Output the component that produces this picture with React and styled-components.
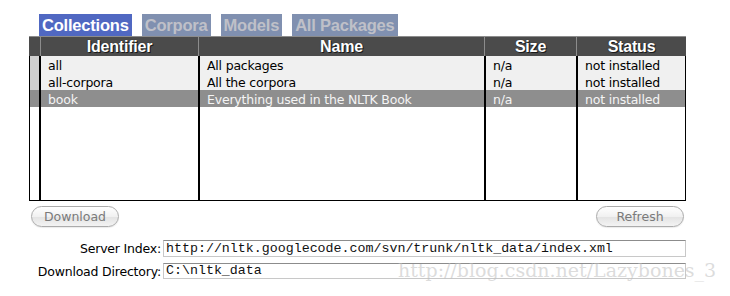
import React from "react";
import styled, { createGlobalStyle } from "styled-components";

const GlobalStyle = createGlobalStyle`
  html, body {
    margin: 0;
    padding: 0;
    background: #ffffff;
  }
  body {
    font-family: "DejaVu Sans", "Liberation Sans", sans-serif;
  }
`;

const packages = [
  { id: "all", name: "All packages", size: "n/a", status: "not installed" },
  { id: "all-corpora", name: "All the corpora", size: "n/a", status: "not installed" },
  { id: "book", name: "Everything used in the NLTK Book", size: "n/a", status: "not installed", selected: true },
];

const tabs = ["Collections", "Corpora", "Models", "All Packages"];

export default function App() {
  return (
    <Page>
      <GlobalStyle />
      <TabBar>
        {tabs.map((t, i) => (
          <Tab key={t} $active={i === 0}>{t}</Tab>
        ))}
      </TabBar>
      <Table>
        <HeaderRow>
          <HeadCell />
          <HeadCell>Identifier</HeadCell>
          <HeadCell>Name</HeadCell>
          <HeadCell>Size</HeadCell>
          <HeadCell>Status</HeadCell>
        </HeaderRow>
        <Body>
          {packages.map((p) => (
            <Row key={p.id} $selected={p.selected}>
              <Marker />
              <Cell>{p.id}</Cell>
              <Cell>{p.name}</Cell>
              <Cell>{p.size}</Cell>
              <Cell>{p.status}</Cell>
            </Row>
          ))}
          <Filler>
            <Marker />
            <Cell />
            <Cell />
            <Cell />
            <Cell />
          </Filler>
        </Body>
      </Table>
      <ButtonRow>
        <PillButton>Download</PillButton>
        <PillButton>Refresh</PillButton>
      </ButtonRow>
      <Form>
        <Label>Server Index:</Label>
        <Field>http://nltk.googlecode.com/svn/trunk/nltk_data/index.xml</Field>
        <Label>Download Directory:</Label>
        <Field $short>C:\nltk_data</Field>
      </Form>
      <Watermark>http://blog.csdn.net/Lazybones_3</Watermark>
    </Page>
  );
}

const Page = styled.div`
  position: relative;
  width: 730px;
  height: 296px;
  padding: 14px 0 0 29px;
  box-sizing: border-box;
  overflow: hidden;
`;

const TabBar = styled.div`
  display: flex;
  gap: 10px;
  margin-left: 10px;
  height: 22px;
`;

const Tab = styled.div`
  display: flex;
  align-items: center;
  padding: 1px 3px 0;
  font-family: "Liberation Sans", Arial, sans-serif;
  font-weight: bold;
  font-size: 16.5px;
  letter-spacing: -0.2px;
  background: ${(p) => (p.$active ? "#5068c2" : "#8090b0")};
  color: ${(p) => (p.$active ? "#ffffff" : "#bfc0c8")};
`;

const Table = styled.div`
  width: 657px;
  display: flex;
  flex-direction: column;
  height: 165px;
`;

const HeaderRow = styled.div`
  display: grid;
  grid-template-columns: 11px 158px 286px 92px 110px;
  height: 20px;
  background: #4b4b4b;
  border-top: 1px solid #8c8c8c;
  box-sizing: border-box;
`;

const HeadCell = styled.div`
  display: flex;
  align-items: center;
  justify-content: center;
  font-family: "Liberation Sans", Arial, sans-serif;
  font-weight: bold;
  font-size: 16px;
  letter-spacing: -0.2px;
  color: #ffffff;
  text-shadow: 1px 1px 0 #1a1a1a, 0 0 1px #1a1a1a;
  & + & {
    border-left: 1px solid #8c8c8c;
  }
`;

const Body = styled.div`
  flex: 1;
  display: flex;
  flex-direction: column;
  border: 1px solid #000;
  border-top: none;
`;

const Row = styled.div`
  display: grid;
  grid-template-columns: 9px 159px 286px 92px 109px;
  height: 17px;
  background: ${(p) => (p.$selected ? "#8e8e8e" : "#f0f0f0")};
  color: ${(p) => (p.$selected ? "#f4f4f4" : "#000000")};
  & > :first-child {
    background: ${(p) => (p.$selected ? "#8e8e8e" : "#cfcfcf")};
  }
`;

const Filler = styled(Row)`
  flex: 1;
  background: #ffffff;
  & > :first-child {
    background: #ffffff;
  }
`;

const Marker = styled.div``;

const Cell = styled.div`
  border-left: 2px solid #000;
  padding-left: 7px;
  font-size: 12.5px;
  letter-spacing: -0.2px;
  line-height: 19px;
  white-space: nowrap;
  overflow: hidden;
`;

const ButtonRow = styled.div`
  width: 657px;
  display: flex;
  justify-content: space-between;
  padding: 0 2px;
  box-sizing: border-box;
  margin-top: 5px;
`;

const PillButton = styled.button`
  width: 88px;
  height: 21px;
  border: 1px solid #ababab;
  border-radius: 11px;
  background: linear-gradient(#ffffff 0%, #f1f1f1 50%, #e4e4e4 55%, #f3f3f3 100%);
  color: #7a7a7a;
  font-family: "DejaVu Sans", sans-serif;
  font-size: 12.5px;
  padding: 0;
  box-shadow: 0 1px 1px rgba(0, 0, 0, 0.08);
`;

const Form = styled.div`
  display: grid;
  grid-template-columns: 132px 523px;
  column-gap: 2px;
  row-gap: 5px;
  margin-top: 13px;
`;

const Label = styled.div`
  text-align: right;
  font-size: 12.5px;
  letter-spacing: -0.2px;
  line-height: 18px;
  color: #000;
`;

const Field = styled.div`
  height: ${(p) => (p.$short ? "16px" : "17px")};
  box-sizing: border-box;
  border: 1px solid #c8c8c8;
  border-top-color: #8c8c8c;
  padding-left: 2px;
  font-family: "Liberation Mono", "Courier New", monospace;
  font-size: 13.3px;
  line-height: ${(p) => (p.$short ? "14px" : "15px")};
  color: #111;
  white-space: nowrap;
  overflow: hidden;
`;

const Watermark = styled.div`
  position: absolute;
  left: 398px;
  top: 259px;
  font-family: "DejaVu Serif", "Liberation Serif", serif;
  font-size: 19px;
  color: rgba(190, 190, 190, 0.55);
  white-space: nowrap;
  pointer-events: none;
`;
